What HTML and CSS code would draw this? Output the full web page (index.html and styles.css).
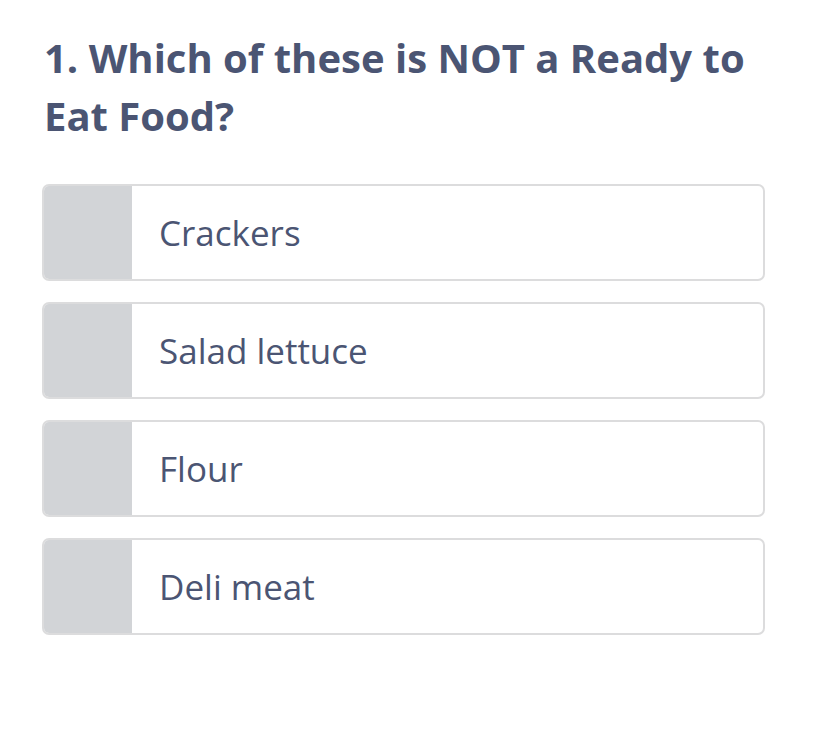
FILE: index.html
```html
<!DOCTYPE html>
<html>
<head>
<meta charset="utf-8">
<link rel="stylesheet" href="styles.css">
</head>
<body>
<div class="quiz">
  <h1 class="question">1. Which of these is NOT a Ready to Eat Food?</h1>
  <div class="options">
    <div class="option"><div class="marker"></div><div class="label">Crackers</div></div>
    <div class="option"><div class="marker"></div><div class="label">Salad lettuce</div></div>
    <div class="option"><div class="marker"></div><div class="label">Flour</div></div>
    <div class="option"><div class="marker"></div><div class="label">Deli meat</div></div>
  </div>
</div>
</body>
</html>
```
FILE: styles.css
```css
html, body {
  margin: 0;
  padding: 0;
  background: #ffffff;
}
body {
  font-family: "Open Sans", "Noto Sans", sans-serif;
  color: #4b5573;
}
.quiz {
  padding: 29px 53px 0 42px;
}
.question {
  margin: 0 0 0 2px;
  font-size: 40px;
  font-weight: 700;
  line-height: 58px;
  color: #4b5573;
}
.options {
  margin-top: 39px;
  display: flex;
  flex-direction: column;
  gap: 21px;
}
.option {
  display: flex;
  height: 97px;
  border: 2px solid #dcdcdd;
  border-radius: 7px;
  overflow: hidden;
  box-sizing: border-box;
}
.marker {
  width: 88px;
  flex: none;
  background: #d2d4d7;
}
.label {
  display: flex;
  align-items: center;
  padding-left: 27px;
  font-size: 35px;
  color: #4b5573;
}
```
